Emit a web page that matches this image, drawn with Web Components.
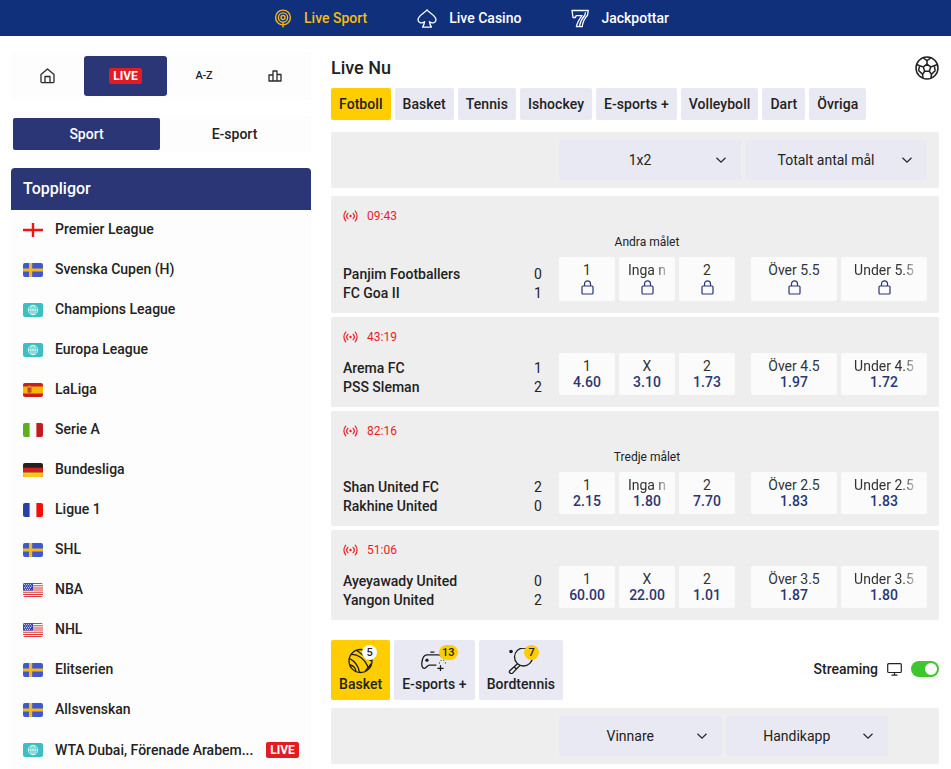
<!DOCTYPE html>
<html lang="sv"><head><meta charset="utf-8"><title>Live Nu</title>
<style>
html,body{margin:0;padding:0;height:769px;overflow:hidden;background:#fff;font-family:Roboto,"Liberation Sans",sans-serif;color:#222;}
</style></head><body>
<sport-app>
  <top-bar slot="top">
    <top-link active label="Live Sport" icon="radio"></top-link>
    <top-link label="Live Casino" icon="spade"></top-link>
    <top-link label="Jackpottar" icon="seven"></top-link>
  </top-bar>
  <side-panel slot="side">
    <icon-nav></icon-nav>
    <seg-switch></seg-switch>
    <league-list heading="Toppligor">
      <league-row flag="en" name="Premier League"></league-row>
      <league-row flag="se" name="Svenska Cupen (H)"></league-row>
      <league-row flag="world" name="Champions League"></league-row>
      <league-row flag="world" name="Europa League"></league-row>
      <league-row flag="es" name="LaLiga"></league-row>
      <league-row flag="it" name="Serie A"></league-row>
      <league-row flag="de" name="Bundesliga"></league-row>
      <league-row flag="fr" name="Ligue 1"></league-row>
      <league-row flag="se" name="SHL"></league-row>
      <league-row flag="us" name="NBA"></league-row>
      <league-row flag="us" name="NHL"></league-row>
      <league-row flag="se" name="Elitserien"></league-row>
      <league-row flag="se" name="Allsvenskan"></league-row>
      <league-row flag="world" name="WTA Dubai, Förenade Arabem..." live></league-row>
    </league-list>
  </side-panel>
  <main-panel slot="main">
    <title-row heading="Live Nu"></title-row>
    <pill-tabs>
      <pill-tab active>Fotboll</pill-tab><pill-tab>Basket</pill-tab><pill-tab>Tennis</pill-tab><pill-tab>Ishockey</pill-tab><pill-tab>E-sports +</pill-tab><pill-tab>Volleyboll</pill-tab><pill-tab>Dart</pill-tab><pill-tab>Övriga</pill-tab>
    </pill-tabs>
    <filter-bar style="--pr:12px;margin-top:12px">
      <select-box style="flex:1">1x2</select-box>
      <select-box style="flex:1">Totalt antal mål</select-box>
    </filter-bar>
    <match-list>
      <match-card time="09:43" heading="Andra målet" locked>
        <team-row slot="teams" name="Panjim Footballers" score="0"></team-row>
        <team-row slot="teams" name="FC Goa II" score="1"></team-row>
        <odd-btn slot="a" label="1" locked></odd-btn><odd-btn slot="a" label="Inga n" fade locked></odd-btn><odd-btn slot="a" label="2" locked></odd-btn>
        <odd-btn slot="b" label="Över 5.5" locked wide></odd-btn><odd-btn slot="b" label="Under 5.5" fade locked wide></odd-btn>
      </match-card>
      <match-card time="43:19">
        <team-row slot="teams" name="Arema FC" score="1"></team-row>
        <team-row slot="teams" name="PSS Sleman" score="2"></team-row>
        <odd-btn slot="a" label="1" value="4.60"></odd-btn><odd-btn slot="a" label="X" value="3.10"></odd-btn><odd-btn slot="a" label="2" value="1.73"></odd-btn>
        <odd-btn slot="b" label="Över 4.5" value="1.97" wide></odd-btn><odd-btn slot="b" label="Under 4.5" value="1.72" fade wide></odd-btn>
      </match-card>
      <match-card time="82:16" heading="Tredje målet">
        <team-row slot="teams" name="Shan United FC" score="2"></team-row>
        <team-row slot="teams" name="Rakhine United" score="0"></team-row>
        <odd-btn slot="a" label="1" value="2.15"></odd-btn><odd-btn slot="a" label="Inga n" value="1.80" fade></odd-btn><odd-btn slot="a" label="2" value="7.70"></odd-btn>
        <odd-btn slot="b" label="Över 2.5" value="1.83" wide></odd-btn><odd-btn slot="b" label="Under 2.5" value="1.83" fade wide></odd-btn>
      </match-card>
      <match-card time="51:06">
        <team-row slot="teams" name="Ayeyawady United" score="0"></team-row>
        <team-row slot="teams" name="Yangon United" score="2"></team-row>
        <odd-btn slot="a" label="1" value="60.00"></odd-btn><odd-btn slot="a" label="X" value="22.00"></odd-btn><odd-btn slot="a" label="2" value="1.01"></odd-btn>
        <odd-btn slot="b" label="Över 3.5" value="1.87" wide></odd-btn><odd-btn slot="b" label="Under 3.5" value="1.80" fade wide></odd-btn>
      </match-card>
    </match-list>
    <sport-strip>
      <sport-tab active icon="basket" badge="5" label="Basket"></sport-tab>
      <sport-tab icon="pad" badge="13" label="E-sports +"></sport-tab>
      <sport-tab icon="paddle" badge="7" label="Bordtennis"></sport-tab>
    </sport-strip>
    <filter-bar style="--pr:51px;margin-top:8px">
      <select-box style="flex:1">Vinnare</select-box>
      <select-box style="flex:1">Handikapp</select-box>
    </filter-bar>
  </main-panel>
</sport-app>
<script>
const ICONS={
 radio:`<svg width="18" height="19" viewBox="0 0 18 19" fill="none" stroke="#f0b71a" stroke-width="1.4"><circle cx="9" cy="8.5" r="7.4"/><circle cx="9" cy="8.5" r="4.6"/><circle cx="9" cy="8.5" r="2"/><path d="M9 13v5.6"/></svg>`,
 spade:`<svg width="20" height="19" viewBox="0 0 20 19" fill="none" stroke="#fff" stroke-width="1.3" stroke-linejoin="round"><path d="M10 .9C8.500 3.500 1 6.500 1 10.800c0 2.900 3.500 4.200 6.600 1.900-.3 2.100-1 3.800-2 5.400h8.800c-1-1.600-1.700-3.300-2-5.400 3.100 2.300 6.600 1 6.600-1.900C19 6.500 11.500 3.500 10 .9z"/></svg>`,
 seven:`<svg width="18" height="19" viewBox="0 0 18 19" fill="none" stroke="#fff" stroke-width="1.3" stroke-linejoin="round"><path d="M1 1.500H17.300L16.500 6.200C13.300 9.500 11.700 13 11.200 17.700H5.400C6.200 13.500 8.500 9.800 11 6.600H5L4.500 8.500H2z"/><path d="M14.500 3.300 13.800 6.300C11 9.500 9.200 13 8.500 17"/></svg>`,
 basket:`<svg width="26" height="26" viewBox="0 0 26 26" fill="none" stroke="#1c1c1c" stroke-width="1.300"><circle cx="12.500" cy="13" r="11.500"/><path d="M3 6.500C9.500 6 17 10.500 20.500 20.500M8.500 2.200C14.500 6.500 19.500 11 23.800 13M1.500 10.500C6.500 13 10.500 18 11.500 24.500M2 17C5 17.500 7.500 20 8 23.300M14 1.700C17.500 4 21 6.500 23 8.500M23.500 15.500 17 23.500"/></svg>`,
 pad:`<svg width="26" height="20" viewBox="0 0 24 18.500" fill="none" stroke="#1c1c1c" stroke-width="1.200" stroke-linecap="round"><path d="M5.500 3.500h11M9 1h3M16.500 3.500c1.500 0 2.300 1 3 2.500M5.500 3.500C2.500 3.500 1.300 6.500.8 10.500c-.4 3 .3 5.500 2.300 5.500 2 0 2.500-3 4.700-3h6"/><circle cx="5.500" cy="8.500" r="1.500" fill="#1c1c1c" stroke="none"/><path d="M18 13.500v5M15.500 16h5"/><path d="M18.500 8.500l.01 0M21 8.500l.01 0M22.500 11l.01 0M17 11l.01 0" stroke-width="1"/></svg>`,
 paddle:`<svg width="26" height="26" viewBox="0 0 26 26" fill="none" stroke="#1c1c1c" stroke-width="1.300" stroke-linejoin="round"><circle cx="3" cy="3.500" r="1.800" fill="#1c1c1c" stroke="none"/><circle cx="15.500" cy="9" r="9"/><path d="M9.800 15.500 2 22.500c-.8.800-.7 1.900 0 2.600.8.700 1.900.7 2.600 0L12 17.300M6 18.800l2.500 2.500"/></svg>`
};
const FLAGS={
 en:`<rect width="20" height="14" fill="#f7fbfe"/><path d="M8.800 0h2.400v14H8.800zM0 5.800h20v2.400H0z" fill="#f01515"/>`,
 se:`<rect width="20" height="14" fill="#3f58d0"/><path d="M6 0h3.200v14H6zM0 5.400h20v3H0z" fill="#f5b71e"/>`,
 world:`<rect width="20" height="14" fill="#3cbfc1"/><g fill="none" stroke="#e8fbfb" stroke-width=".9"><circle cx="10" cy="7" r="4.700"/><ellipse cx="10" cy="7" rx="2.200" ry="4.700"/><path d="M5.300 7h9.400M10 2.300v9.400"/></g>`,
 es:`<rect width="20" height="14" fill="#c9201f"/><rect y="3.500" width="20" height="7" fill="#fbb400"/><rect x="4.500" y="4.300" width="4" height="5.500" rx="1" fill="#c04a2a"/><rect x="5.500" y="2.700" width="2" height="1.500" fill="#d8a030"/>`,
 it:`<rect width="20" height="14" fill="#f8f8f8"/><rect width="6.600" height="14" fill="#5fae1f"/><rect x="13.400" width="6.600" height="14" fill="#c5191d"/>`,
 de:`<rect width="20" height="14" fill="#222"/><rect y="4.700" width="20" height="4.700" fill="#d3201f"/><rect y="9.400" width="20" height="4.600" fill="#fbc71d"/>`,
 fr:`<rect width="20" height="14" fill="#f8f8f8"/><rect width="6.600" height="14" fill="#2b3ea8"/><rect x="13.400" width="6.600" height="14" fill="#f80c05"/>`,
 us:`<rect width="20" height="14" fill="#fafafa"/><path d="M0 0h20v1H0zM0 2.200h20v1H0zM0 4.400h20v1H0zM0 6.600h20v1H0zM0 8.800h20v1H0zM0 11h20v1H0zM0 13h20v1H0z" fill="#e0393b"/><rect width="10" height="7.500" fill="#3648a8"/><g fill="#dfe4f8"><circle cx="1.500" cy="1.300" r=".6"/><circle cx="3.500" cy="1.300" r=".6"/><circle cx="5.500" cy="1.300" r=".6"/><circle cx="7.500" cy="1.300" r=".6"/><circle cx="2.500" cy="3" r=".6"/><circle cx="4.500" cy="3" r=".6"/><circle cx="6.500" cy="3" r=".6"/><circle cx="8.500" cy="3" r=".6"/><circle cx="1.500" cy="4.700" r=".6"/><circle cx="3.500" cy="4.700" r=".6"/><circle cx="5.500" cy="4.700" r=".6"/><circle cx="7.500" cy="4.700" r=".6"/><circle cx="2.500" cy="6.300" r=".6"/><circle cx="4.500" cy="6.300" r=".6"/><circle cx="6.500" cy="6.300" r=".6"/></g>`
};
const CHEVRON=`<svg width="12" height="8" viewBox="0 0 12 8" fill="none" stroke="#2a2a2a" stroke-width="1.300"><path d="M1.500 1.800 6 6.200l4.500-4.400"/></svg>`;
const LOCK=`<svg width="13" height="15" viewBox="0 0 13 15" fill="none" stroke="#2a3675" stroke-width="1.200"><rect x="1" y="6" width="11" height="8" rx="1"/><path d="M3.500 6V3.800a3 3 0 0 1 6 0V6"/></svg>`;
const SIGNAL=`<svg width="15" height="12" viewBox="0 0 15 12" fill="none" stroke="#ec1c24" stroke-width="1.200" stroke-linecap="round"><circle cx="7.500" cy="6" r="1.200" fill="#ec1c24" stroke="none"/><path d="M4.900 3.300c-1.400 1.500-1.400 3.900 0 5.400M10.100 3.300c1.400 1.500 1.400 3.900 0 5.400M2.800 1.200c-2.500 2.700-2.500 6.900 0 9.600M12.200 1.200c2.500 2.700 2.500 6.900 0 9.600"/></svg>`;
const BALL=`<svg width="24" height="24" viewBox="0 0 24 24" fill="none" stroke="#222" stroke-width="1.500" stroke-linejoin="round"><circle cx="12" cy="12" r="11"/><path d="M12 8.200l3.700 2.700-1.400 4.300H9.700L8.300 10.900z"/><path d="M12 8.200V4.600M15.700 10.900l3.500-1.200M14.300 15.200l2.200 3M9.700 15.200l-2.200 3M8.300 10.900 4.800 9.700"/><path d="M8.300 2 12 4.600 15.700 2M19.200 9.700l3.300-1.200M19.200 9.700l1 4.700M16.500 18.200l4-3.800M16.500 18.200l-.5 4M7.500 18.200l.5 4M7.500 18.200l-4-3.800M4.800 9.700l-1.300 4.700M4.800 9.700 1.500 8.500"/></svg>`;

function el(name,css,render){
  customElements.define(name,class extends HTMLElement{
    connectedCallback(){
      if(this.shadowRoot)return;
      const r=this.attachShadow({mode:'open'});
      r.innerHTML=`<style>${css}</style>`+render(this);
    }
  });
}
const A=(e,n)=>e.getAttribute(n)||'';

el('sport-app',`:host{display:block;height:769px;overflow:hidden}
 .cols{display:flex;padding-left:11px;align-items:flex-start;gap:20px}`,
 ()=>`<slot name="top"></slot><div class="cols"><slot name="side"></slot><slot name="main"></slot></div>`);

el('top-bar',`:host{display:flex;height:36px;background:#11307c;justify-content:center;align-items:center;gap:50px;padding-right:8px}`,()=>`<slot></slot>`);
el('top-link',`:host{display:flex;align-items:center;gap:12px;font:500 14px/20px Roboto,sans-serif;color:#fff}
 :host([active]){color:#f4bd12} svg{display:block}`,e=>ICONS[A(e,'icon')]+`<span>${A(e,'label')}</span>`);

el('side-panel',`:host{display:block;width:300px;padding-top:16px}`,()=>`<slot></slot>`);
el('icon-nav',`:host{display:flex;height:48px;padding:4px 0;box-sizing:border-box;background:#fdfdfd}
 div{display:flex;align-items:center;justify-content:center;height:40px;color:#222}
 .live{background:#2a3675;border-radius:3px}
 b{background:#e31b23;color:#fff;font:700 12px/16px Roboto,sans-serif;padding:0 4px;border-radius:2px;width:25px;text-align:center}
 span{font:500 11px/14px Roboto,sans-serif;letter-spacing:-.2px}svg{display:block}`,
 ()=>`<div style="width:73px"><svg width="15" height="16" viewBox="0 0 15 16" fill="none" stroke="#2a2a2a" stroke-width="1.300" stroke-linejoin="round"><path d="M1 6.500 7.500 1 14 6.500V13.500a1.200 1.200 0 0 1-1.200 1.200H2.200A1.200 1.200 0 0 1 1 13.500z"/><path d="M5 14.700V8.500h5v6.200"/></svg></div>
 <div class="live" style="width:83px"><b>LIVE</b></div>
 <div style="width:74px"><span>A-Z</span></div>
 <div style="width:67px"><svg width="14" height="12" viewBox="0 0 14 12" fill="none" stroke="#2a2a2a" stroke-width="1.300" stroke-linejoin="round"><path d="M1 5h4v6H1zM5 1h4v10H5zM9 4.500h4V11H9z"/></svg></div>`);
el('seg-switch',`:host{display:flex;height:36px;padding:2px;box-sizing:border-box;background:#fdfdfd;margin-top:16px;font:500 14px/32px Roboto,sans-serif;text-align:center}
 div{border-radius:2px} .on{width:147px;background:#2a3675;color:#fff} .off{flex:1;color:#222}`,
 ()=>`<div class="on">Sport</div><div class="off">E-sport</div>`);
el('league-list',`:host{display:block;margin-top:16px;background:#fdfdfd}
 h2{margin:0;height:42px;background:#2a3675;color:#fff;font:500 16px/42px Roboto,sans-serif;padding-left:12px;border-radius:4px 4px 0 0}`,
 e=>`<h2>${A(e,'heading')}</h2><slot></slot>`);
el('league-row',`:host{display:flex;align-items:center;height:40px;box-sizing:border-box;padding:0 12px;font:500 14px/20px Roboto,sans-serif;color:#222}
 svg{flex:none;display:block;margin-right:12px;border-radius:2px}
 span{flex:1;min-width:0;white-space:nowrap;padding-bottom:2px}
 :host([live]) span{padding-bottom:0}
 b{flex:none;background:#e31b23;color:#fff;font:700 12px/16px Roboto,sans-serif;width:33px;text-align:center;border-radius:2px}`,
 e=>`<svg width="20" height="14" viewBox="0 0 20 14">${FLAGS[A(e,'flag')]}</svg><span>${A(e,'name')}</span>`+(e.hasAttribute('live')?'<b>LIVE</b>':''));

el('main-panel',`:host{display:block;width:608px;padding-top:16px}`,()=>`<slot></slot>`);
el('title-row',`:host{display:flex;justify-content:space-between;align-items:center;height:32px}
 h1{margin:0;font:500 18px/24px Roboto,sans-serif;color:#222} svg{display:block}`,
 e=>`<h1>${A(e,'heading')}</h1>${BALL}`);
el('pill-tabs',`:host{display:flex;gap:4px;margin-top:4px}`,()=>`<slot></slot>`);
el('pill-tab',`:host{display:block;height:32px;padding:0 8px;background:#e9e9f4;border-radius:2px;font:500 14px/32px Roboto,sans-serif;color:#222;letter-spacing:.06px}
 :host([active]){background:#ffcd00}`,()=>`<slot></slot>`);
el('filter-bar',`:host{display:flex;gap:4px;height:56px;box-sizing:border-box;padding:8px var(--pr) 8px 228px;background:#eee;border-radius:2px}`,()=>`<slot></slot>`);
el('select-box',`:host{display:flex;align-items:center;height:40px;background:#e9e9f4;border-radius:2px;padding-right:14px;font:400 14px/20px Roboto,sans-serif;color:#222}
 span{flex:1;text-align:center} svg{display:block;margin-left:-6px}`,()=>`<span><slot></slot></span>${CHEVRON}`);
el('match-list',`:host{display:flex;flex-direction:column;gap:4px;margin-top:8px}`,()=>`<slot></slot>`);
el('match-card',`:host{display:block;background:#eee;border-radius:2px;padding:0 12px 12px}
 .time{display:flex;align-items:center;gap:9px;height:36px;box-sizing:border-box;padding-top:3px;color:#ec1c24;font:400 12px/16px Roboto,sans-serif}
 svg{display:block}
 .head{height:25px;margin-left:216px;width:176px;text-align:center;font:400 12px/21px Roboto,sans-serif;color:#222}
 .row{display:flex;align-items:flex-start}
 .teams{width:203px;height:42px;box-sizing:border-box;margin-right:13px;padding-top:6px}
 :host([locked]) .teams{padding-top:8px}
 .grp{display:flex;gap:4px}
 .b{margin-left:16px}`,
 e=>`<div class="time">${SIGNAL}<span>${A(e,'time')}</span></div>`+(A(e,'heading')?`<div class="head">${A(e,'heading')}</div>`:'')+
 `<div class="row"><div class="teams"><slot name="teams"></slot></div><div class="grp"><slot name="a"></slot></div><div class="grp b"><slot name="b"></slot></div></div>`);
el('team-row',`:host{display:flex;justify-content:space-between;height:19px;font:500 14px/19px Roboto,sans-serif;color:#222}
 i{font-style:normal;font-weight:400;width:16px;text-align:center}`,e=>`<span>${A(e,'name')}</span><i>${A(e,'score')}</i>`);
el('odd-btn',`:host{display:block;box-sizing:border-box;width:56px;height:42px;padding:5px 8px;background:#fbfbfb;border-radius:2px;text-align:center;font:400 14px/16px Roboto,sans-serif;color:#333}
 :host([wide]){width:86px}
 :host([locked]){height:44px}
 .l{display:inline-block;white-space:nowrap}
 :host([fade]) .l{-webkit-mask-image:linear-gradient(to right,#000 calc(100% - 10px),rgba(0,0,0,.3));mask-image:linear-gradient(to right,#000 calc(100% - 10px),rgba(0,0,0,.3))}
 .v{color:#2a3675;font-weight:500}
 svg{display:block;margin:2px auto 0}`,
 e=>`<div><span class="l">${A(e,'label')}</span></div>`+(e.hasAttribute('locked')?LOCK:`<div class="v">${A(e,'value')}</div>`));
el('sport-strip',`:host{display:flex;align-items:center;margin-top:20px;font:500 14px/20px Roboto,sans-serif;color:#222}
 .tabs{display:flex;gap:4px;flex:1}
 .st{display:flex;align-items:center;gap:9px;margin-bottom:2px} .sw{width:28px;height:16px;border-radius:8px;background:#3fc52f;display:flex;justify-content:flex-end;align-items:center;padding:2px;box-sizing:border-box}
 .sw i{display:block;width:12px;height:12px;border-radius:50%;background:#fff} svg{display:block}`,
 ()=>`<div class="tabs"><slot></slot></div><div class="st"><span>Streaming</span><svg width="15" height="13" viewBox="0 0 15 13" fill="none" stroke="#222" stroke-width="1.200"><rect x=".7" y=".7" width="13.600" height="8.800" rx="1"/><path d="M7.500 9.500v2.500M4.500 12.200h6" /></svg><div class="sw"><i></i></div></div>`);
el('sport-tab',`:host{display:flex;flex-direction:column;align-items:center;position:relative;height:60px;box-sizing:border-box;padding:7px 8px 0;background:#e9e9f4;border-radius:2px;font:500 14px/20px Roboto,sans-serif;color:#222;letter-spacing:.04px}
 :host([active]){background:#ffcd00}
 .ic{height:27px;display:flex;align-items:center;justify-content:center}
 svg{display:block}
 .bd{position:absolute;top:5px;height:15px;min-width:15px;box-sizing:border-box;padding:0 3px;border-radius:8px;background:#ffcd00;font:500 11px/15px Roboto,sans-serif;text-align:center}
 :host([active]) .bd{background:#fff}`,
 e=>{const ic=A(e,'icon');const rt={basket:13,pad:17,paddle:24}[ic];return `<div class="ic">${ICONS[ic]}</div><span>${A(e,'label')}</span><div class="bd" style="right:${rt}px">${A(e,'badge')}</div>`});
</script>
</body></html>
